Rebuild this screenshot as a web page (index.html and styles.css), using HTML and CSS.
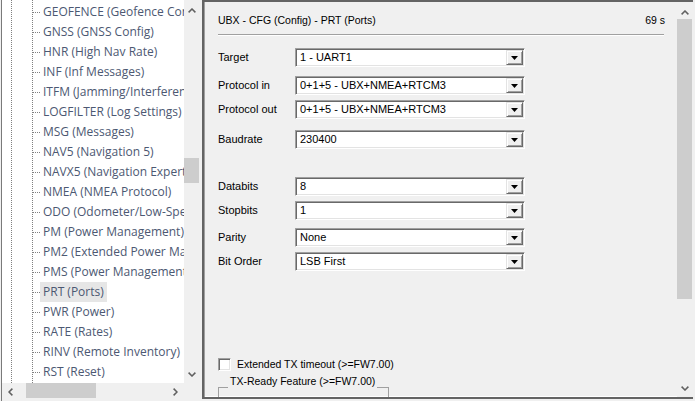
FILE: index.html
```html
<!DOCTYPE html>
<html>
<head>
<meta charset="utf-8">
<link rel="stylesheet" href="styles.css">
</head>
<body>
<div class="app">
  <div class="tree-pane">
    <div class="tree-main">
      <div class="tree-view">
        <div class="tree-level1">
          <div class="tree-level2">
            <div class="tree-row"><span class="conn"></span><span class="item">GEOFENCE (Geofence Config)</span></div>
            <div class="tree-row"><span class="conn"></span><span class="item">GNSS (GNSS Config)</span></div>
            <div class="tree-row"><span class="conn"></span><span class="item">HNR (High Nav Rate)</span></div>
            <div class="tree-row"><span class="conn"></span><span class="item">INF (Inf Messages)</span></div>
            <div class="tree-row"><span class="conn"></span><span class="item">ITFM (Jamming/Interference Monitor)</span></div>
            <div class="tree-row"><span class="conn"></span><span class="item">LOGFILTER (Log Settings)</span></div>
            <div class="tree-row"><span class="conn"></span><span class="item">MSG (Messages)</span></div>
            <div class="tree-row"><span class="conn"></span><span class="item">NAV5 (Navigation 5)</span></div>
            <div class="tree-row"><span class="conn"></span><span class="item">NAVX5 (Navigation Expert 5)</span></div>
            <div class="tree-row"><span class="conn"></span><span class="item">NMEA (NMEA Protocol)</span></div>
            <div class="tree-row"><span class="conn"></span><span class="item">ODO (Odometer/Low-Speed COG Filter)</span></div>
            <div class="tree-row"><span class="conn"></span><span class="item">PM (Power Management)</span></div>
            <div class="tree-row"><span class="conn"></span><span class="item">PM2 (Extended Power Management)</span></div>
            <div class="tree-row"><span class="conn"></span><span class="item">PMS (Power Management Setup)</span></div>
            <div class="tree-row"><span class="conn"></span><span class="item selected">PRT (Ports)</span></div>
            <div class="tree-row"><span class="conn"></span><span class="item">PWR (Power)</span></div>
            <div class="tree-row"><span class="conn"></span><span class="item">RATE (Rates)</span></div>
            <div class="tree-row"><span class="conn"></span><span class="item">RINV (Remote Inventory)</span></div>
            <div class="tree-row"><span class="conn"></span><span class="item">RST (Reset)</span></div>
          </div>
        </div>
      </div>
      <div class="vscroll small">
        <div class="sbtn up"><svg width="8" height="5" viewBox="0 0 8 5"><path d="M0.6 4.4 L4 1 L7.4 4.4" fill="none" stroke="#606060" stroke-width="1.5"/></svg></div>
        <div class="vtrack"><div class="vthumb small-thumb"></div></div>
        <div class="sbtn down"><svg width="8" height="5" viewBox="0 0 8 5"><path d="M0.6 0.6 L4 4 L7.4 0.6" fill="none" stroke="#606060" stroke-width="1.5"/></svg></div>
      </div>
    </div>
    <div class="hscroll-row">
      <div class="hscroll">
        <div class="hbtn"><svg width="5" height="8" viewBox="0 0 5 8"><path d="M4.4 0.6 L1 4 L4.4 7.4" fill="none" stroke="#606060" stroke-width="1.5"/></svg></div>
        <div class="htrack"><div class="hthumb"></div></div>
        <div class="hbtn"><svg width="5" height="8" viewBox="0 0 5 8"><path d="M0.6 0.6 L4 4 L0.6 7.4" fill="none" stroke="#606060" stroke-width="1.5"/></svg></div>
      </div>
      <div class="corner"></div>
    </div>
  </div>
  <div class="splitter"></div>
  <div class="config-pane">
    <div class="config-body">
      <div class="header">
        <span class="title">UBX - CFG (Config) - PRT (Ports)</span>
        <span class="timer">69 s</span>
      </div>
      <div class="separator"></div>
      <div class="form">
        <div class="row mt-12"><span class="label">Target</span><div class="combo"><span class="value">1 - UART1</span><span class="dd"><svg width="7" height="4" viewBox="0 0 7 4"><polygon points="0,0 7,0 3.5,4" fill="#000"/></svg></span></div></div>
        <div class="row mt-9"><span class="label">Protocol in</span><div class="combo"><span class="value">0+1+5 - UBX+NMEA+RTCM3</span><span class="dd"><svg width="7" height="4" viewBox="0 0 7 4"><polygon points="0,0 7,0 3.5,4" fill="#000"/></svg></span></div></div>
        <div class="row mt-5"><span class="label">Protocol out</span><div class="combo"><span class="value">0+1+5 - UBX+NMEA+RTCM3</span><span class="dd"><svg width="7" height="4" viewBox="0 0 7 4"><polygon points="0,0 7,0 3.5,4" fill="#000"/></svg></span></div></div>
        <div class="row mt-11"><span class="label">Baudrate</span><div class="combo"><span class="value">230400</span><span class="dd"><svg width="7" height="4" viewBox="0 0 7 4"><polygon points="0,0 7,0 3.5,4" fill="#000"/></svg></span></div></div>
        <div class="row mt-28"><span class="label">Databits</span><div class="combo"><span class="value">8</span><span class="dd"><svg width="7" height="4" viewBox="0 0 7 4"><polygon points="0,0 7,0 3.5,4" fill="#000"/></svg></span></div></div>
        <div class="row mt-5"><span class="label">Stopbits</span><div class="combo"><span class="value">1</span><span class="dd"><svg width="7" height="4" viewBox="0 0 7 4"><polygon points="0,0 7,0 3.5,4" fill="#000"/></svg></span></div></div>
        <div class="row mt-8"><span class="label">Parity</span><div class="combo"><span class="value">None</span><span class="dd"><svg width="7" height="4" viewBox="0 0 7 4"><polygon points="0,0 7,0 3.5,4" fill="#000"/></svg></span></div></div>
        <div class="row mt-5"><span class="label">Bit Order</span><div class="combo"><span class="value">LSB First</span><span class="dd"><svg width="7" height="4" viewBox="0 0 7 4"><polygon points="0,0 7,0 3.5,4" fill="#000"/></svg></span></div></div>
        <div class="check-row"><span class="checkbox"></span><span class="check-label">Extended TX timeout (&gt;=FW7.00)</span></div>
        <fieldset class="group"><legend>TX-Ready Feature (&gt;=FW7.00)</legend></fieldset>
      </div>
    </div>
    <div class="vscroll big">
      <div class="sbtn up"><svg width="8" height="5" viewBox="0 0 8 5"><path d="M0.6 4.4 L4 1 L7.4 4.4" fill="none" stroke="#606060" stroke-width="1.5"/></svg></div>
      <div class="vtrack"><div class="vthumb big-thumb"></div></div>
      <div class="sbtn down"><svg width="8" height="5" viewBox="0 0 8 5"><path d="M0.6 0.6 L4 4 L7.4 0.6" fill="none" stroke="#606060" stroke-width="1.5"/></svg></div>
    </div>
  </div>
  <div class="edge"></div>
</div>
</body>
</html>
```

FILE: styles.css
```css
html, body {
  margin: 0;
  padding: 0;
  background: #f0f0f0;
}
body {
  width: 695px;
  height: 401px;
  overflow: hidden;
}
.app {
  display: flex;
  align-items: flex-start;
  height: 401px;
  padding-left: 1px;
  box-sizing: border-box;
}

/* ---------- tree pane ---------- */
.tree-pane {
  width: 199px;
  height: 401px;
  border-left: 1px solid #7a7a7a;
  box-sizing: border-box;
  display: flex;
  flex-direction: column;
}
.tree-main {
  display: flex;
  height: 383px;
}
.tree-view {
  width: 182px;
  height: 383px;
  background: #fff;
  overflow: hidden;
  font-family: "Open Sans", "Noto Sans", sans-serif;
  font-size: 12px;
  color: #4c5872;
}
.tree-level1 {
  margin-left: 9px;
  height: 100%;
  border-left: 1px dotted #808080;
}
.tree-level2 {
  margin-left: 20px;
  height: 100%;
  border-left: 1px dotted #808080;
  padding-top: 2px;
  box-sizing: border-box;
}
.tree-row {
  height: 20px;
  display: flex;
  align-items: center;
  white-space: nowrap;
  overflow: hidden;
}
.conn {
  width: 7px;
  flex: none;
  border-top: 1px dotted #808080;
  align-self: center;
}
.item {
  padding: 0 3px;
  line-height: 20px;
  min-width: 0;
  overflow: hidden;
  flex: 0 1 auto;
}
.item.selected {
  background: #e6e6e6;
}

/* ---------- scrollbars ---------- */
.vscroll {
  width: 16px;
  background: #f0f0f0;
  display: flex;
  flex-direction: column;
  flex: none;
}
.vscroll.small { height: 383px; }
.vscroll.big { height: 395px; }
.sbtn {
  height: 17px;
  display: flex;
  align-items: center;
  justify-content: center;
  flex: none;
}
.sbtn.up { padding-top: 3px; height: 14px; }
.vtrack {
  flex: 1;
  display: flex;
  flex-direction: column;
}
.vthumb {
  background: #cdcdcd;
  margin: 0 1px 0 0;
}
.small-thumb {
  margin-top: 141px;
  height: 25px;
}
.big-thumb {
  margin-top: 0;
  height: 280px;
}
.hscroll-row {
  display: flex;
  height: 18px;
}
.hscroll {
  width: 182px;
  display: flex;
  align-items: stretch;
}
.hbtn {
  width: 17px;
  display: flex;
  align-items: center;
  justify-content: center;
  flex: none;
}
.htrack {
  flex: 1;
  display: flex;
  align-items: stretch;
}
.hthumb {
  margin-left: 7px;
  width: 70px;
  height: 15px;
  background: #cdcdcd;
}
.corner {
  width: 16px;
  background: #f0f0f0;
}
.splitter {
  width: 2px;
  height: 401px;
  flex: none;
}

/* ---------- config pane ---------- */
.config-pane {
  width: 491px;
  height: 399px;
  flex: none;
  box-sizing: border-box;
  border-top: 2px solid #646464;
  border-left: 2px solid #646464;
  border-bottom: 2px solid #646464;
  box-shadow: inset 1px 0 0 #a0a0a0, inset 0 -1px 0 #ffffff;
  display: flex;
  font-family: "Liberation Sans", Arial, sans-serif;
  font-size: 11px;
  color: #000;
}
.config-body {
  width: 473px;
  height: 395px;
  overflow: hidden;
  padding-left: 14px;
  box-sizing: border-box;
}
.header {
  display: flex;
  justify-content: space-between;
  padding-top: 12px;
  padding-right: 12px;
  line-height: 13px;
  font-size: 10.5px;
}
.separator {
  margin-top: 7px;
  margin-right: 13px;
  height: 1px;
  background: #a0a0a0;
  border-bottom: 1px solid #fff;
}
.form {
  display: flex;
  flex-direction: column;
}
.row {
  display: flex;
  align-items: center;
  height: 19px;
}
.mt-12 { margin-top: 12px; }
.mt-9 { margin-top: 9px; }
.mt-5 { margin-top: 5px; }
.mt-11 { margin-top: 11px; }
.mt-28 { margin-top: 28px; }
.mt-8 { margin-top: 8px; }
.label {
  width: 77px;
  flex: none;
  line-height: 13px;
}
.combo {
  width: 230px;
  height: 19px;
  box-sizing: border-box;
  background: #fff;
  border: 1px solid;
  border-color: #a0a0a0 #ffffff #ffffff #a0a0a0;
  box-shadow: inset 1px 1px 0 #696969, inset -1px -1px 0 #e3e3e3;
  display: flex;
  align-items: center;
  padding: 1px;
}
.value {
  flex: 1;
  padding-left: 3px;
  line-height: 13px;
}
.dd {
  width: 17px;
  height: 15px;
  box-sizing: border-box;
  background: #f0f0f0;
  border: 1px solid;
  border-color: #e3e3e3 #696969 #696969 #e3e3e3;
  box-shadow: inset 1px 1px 0 #fff, inset -1px -1px 0 #a0a0a0;
  display: flex;
  align-items: center;
  justify-content: center;
}
.check-row {
  display: flex;
  align-items: center;
  height: 13px;
  margin-top: 87px;
}
.checkbox {
  width: 13px;
  height: 13px;
  box-sizing: border-box;
  background: #fff;
  border: 1px solid;
  border-color: #a0a0a0 #fff #fff #a0a0a0;
  box-shadow: inset 1px 1px 0 #696969, inset -1px -1px 0 #e3e3e3;
  flex: none;
}
.check-label {
  margin-left: 6px;
  line-height: 13px;
  font-size: 10.5px;
}
.group {
  margin: 4px 0 0 0;
  padding: 0 0 0 9px;
  width: 171px;
  height: 60px;
  box-sizing: border-box;
  border: 1px solid #a0a0a0;
  min-width: 0;
  font-size: 10.5px;
}
.group legend {
  padding: 0 2px 12px 2px;
  line-height: 13px;
}
.edge {
  width: 2px;
  height: 401px;
}
```
